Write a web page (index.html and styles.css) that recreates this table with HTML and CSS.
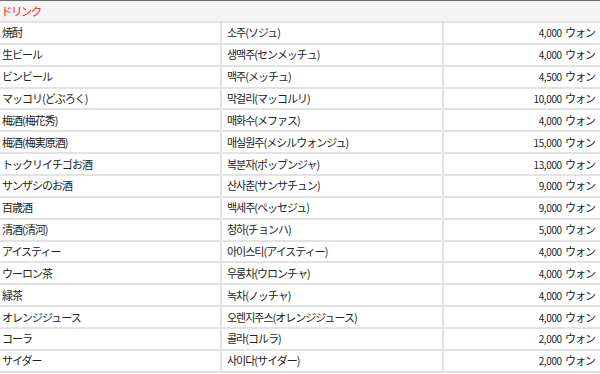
FILE: index.html
```html
<!DOCTYPE html>
<html lang="ja">
<head>
<meta charset="utf-8">
<link rel="stylesheet" href="styles.css">
</head>
<body>
<table class="menu">
  <colgroup><col class="c1"><col class="c2"><col class="c3"></colgroup>
  <thead>
    <tr><th colspan="3" class="cat">ドリンク</th></tr>
  </thead>
  <tbody>
    <tr><td class="ja">焼酎</td><td class="ko">소주(ソジュ)</td><td class="pr">4,000 <span class="won">ウォン</span></td></tr>
    <tr><td class="ja">生ビール</td><td class="ko">생맥주(センメッチュ)</td><td class="pr">4,000 <span class="won">ウォン</span></td></tr>
    <tr><td class="ja">ビンビール</td><td class="ko">맥주(メッチュ)</td><td class="pr">4,500 <span class="won">ウォン</span></td></tr>
    <tr><td class="ja">マッコリ(どぶろく)</td><td class="ko">막걸리(マッコルリ)</td><td class="pr">10,000 <span class="won">ウォン</span></td></tr>
    <tr><td class="ja">梅酒(梅花秀)</td><td class="ko">매화수(メファス)</td><td class="pr">4,000 <span class="won">ウォン</span></td></tr>
    <tr><td class="ja">梅酒(梅実原酒)</td><td class="ko">매실원주(メシルウォンジュ)</td><td class="pr">15,000 <span class="won">ウォン</span></td></tr>
    <tr><td class="ja">トックリイチゴお酒</td><td class="ko">복분자(ポッブンジャ)</td><td class="pr">13,000 <span class="won">ウォン</span></td></tr>
    <tr><td class="ja">サンザシのお酒</td><td class="ko">산사춘(サンサチュン)</td><td class="pr">9,000 <span class="won">ウォン</span></td></tr>
    <tr><td class="ja">百歳酒</td><td class="ko">백세주(ペッセジュ)</td><td class="pr">9,000 <span class="won">ウォン</span></td></tr>
    <tr><td class="ja">清酒(清河)</td><td class="ko">청하(チョンハ)</td><td class="pr">5,000 <span class="won">ウォン</span></td></tr>
    <tr><td class="ja">アイスティー</td><td class="ko">아이스티(アイスティー)</td><td class="pr">4,000 <span class="won">ウォン</span></td></tr>
    <tr><td class="ja">ウーロン茶</td><td class="ko">우롱차(ウロンチャ)</td><td class="pr">4,000 <span class="won">ウォン</span></td></tr>
    <tr><td class="ja">緑茶</td><td class="ko">녹차(ノッチャ)</td><td class="pr">4,000 <span class="won">ウォン</span></td></tr>
    <tr><td class="ja">オレンジジュース</td><td class="ko">오렌지주스(オレンジジュース)</td><td class="pr">4,000 <span class="won">ウォン</span></td></tr>
    <tr><td class="ja">コーラ</td><td class="ko">콜라(コルラ)</td><td class="pr">2,000 <span class="won">ウォン</span></td></tr>
    <tr><td class="ja">サイダー</td><td class="ko">사이다(サイダー)</td><td class="pr">2,000 <span class="won">ウォン</span></td></tr>
  </tbody>
</table>
</body>
</html>
```
FILE: styles.css
```css
html, body {
  margin: 0;
  padding: 0;
  background: #ffffff;
}
body {
  font-family: "Noto Sans CJK JP", "Noto Sans CJK KR", "Noto Sans", sans-serif;
  font-size: 11px;
  letter-spacing: -1px;
  color: #222222;
}
.menu {
  width: 600px;
  border-collapse: collapse;
  table-layout: fixed;
  border-top: 1px solid #6e6e6e;
}
.c1 { width: 221px; }
.c2 { width: 222px; }
.c3 { width: 157px; }
.cat {
  height: 20px;
  padding: 0 1px;
  text-align: left;
  font-weight: normal;
  font-size: 11.5px;
  letter-spacing: -1.6px;
  color: #f5260a;
  background: #f4f4f4;
  border-bottom: 2px solid #e3e3e3;
  vertical-align: middle;
  line-height: 20px;
}
.menu td {
  height: 19.86px;
  padding: 0;
  line-height: 19px;
  border-bottom: 2px solid #e3e3e3;
  vertical-align: middle;
  white-space: nowrap;
  overflow: hidden;
}
.menu td.ja {
  padding-left: 2px;
  border-right: 2px solid #e3e3e3;
}
.menu td.ko {
  padding-left: 5px;
  border-right: 2px solid #e3e3e3;
}
.menu td.pr {
  padding-right: 5px;
  text-align: right;
  font-size: 10px;
  letter-spacing: -0.4px;
  word-spacing: 1.5px;
}
.won {
  font-size: 11px;
  letter-spacing: -1px;
}
```
